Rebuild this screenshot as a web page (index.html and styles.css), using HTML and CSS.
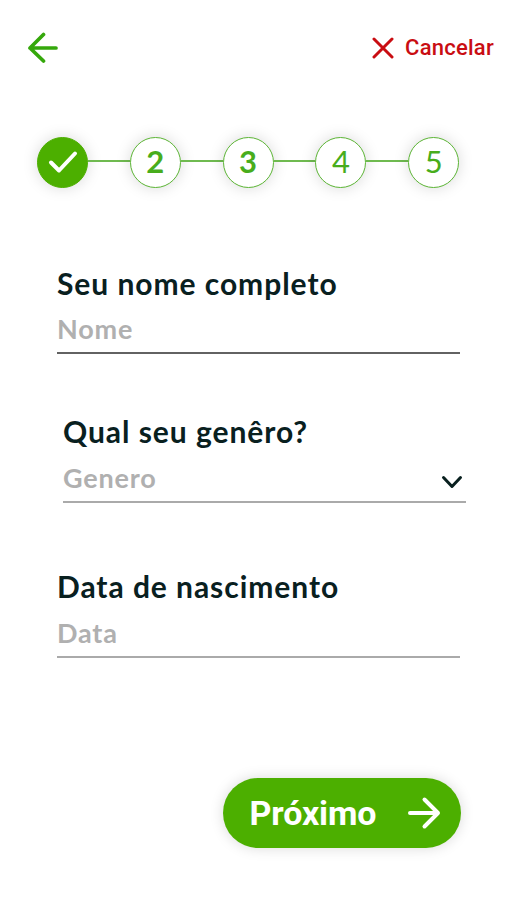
FILE: index.html
```html
<!DOCTYPE html>
<html lang="pt-BR">
<head>
<meta charset="utf-8">
<title>Cadastro</title>
<link rel="stylesheet" href="styles.css">
</head>
<body>
<header class="topbar">
  <svg class="back" width="32" height="32" viewBox="0 0 32 32"><path d="M29 16H3M16.500 2.500L3 16L16.500 29"/></svg>
  <div class="cancel">
    <svg width="22" height="22" viewBox="0 0 22 22"><path d="M2 2L20 20M20 2L2 20"/></svg>
    <span class="cancel-text">Cancelar</span>
  </div>
</header>
<ol class="steps">
  <li class="step done"><svg width="30" height="24" viewBox="0 0 30 24"><path d="M3 12.500L11 20.500L27 3.500"/></svg></li>
  <li class="line"></li>
  <li class="step bold">2</li>
  <li class="line"></li>
  <li class="step bold">3</li>
  <li class="line"></li>
  <li class="step">4</li>
  <li class="line"></li>
  <li class="step">5</li>
</ol>
<main class="form">
  <section class="field name">
    <div class="label"><span class="label-name">Seu nome completo</span></div>
    <div class="value"><span class="value-name">Nome</span></div>
  </section>
  <section class="field gender">
    <div class="label"><span class="label-gender">Qual seu genêro?</span></div>
    <div class="value"><span class="value-gender">Genero</span><svg width="22" height="14" viewBox="0 0 22 14"><path d="M2.500 2.500L11 11.500L19.500 2.500"/></svg></div>
  </section>
  <section class="field birth">
    <div class="label"><span class="label-birth">Data de nascimento</span></div>
    <div class="value"><span class="value-birth">Data</span></div>
  </section>
</main>
<div class="next">
  <span class="next-text">Próximo</span>
  <svg width="34" height="34" viewBox="0 0 34 34"><path d="M3 17H31M17.500 3.500L31 17L17.500 30.500"/></svg>
</div>
</body>
</html>
```
FILE: styles.css
```css
* { box-sizing: border-box; }
body { margin: 0; width: 506px; height: 900px; overflow: hidden; background: #fff; font-family: Lato, sans-serif; }
svg { display: block; flex: none; fill: none; stroke: currentColor; stroke-linecap: round; stroke-linejoin: round; }
.topbar { display: flex; justify-content: space-between; align-items: center; height: 96px; padding: 0 12px 0 27px; }
.back { color: #35a80b; stroke-width: 3.7; }
.cancel { display: flex; align-items: center; gap: 11px; color: #c90d12; font: 500 22px/30px Roboto, sans-serif; }
.cancel svg { stroke-width: 3; }
.cancel-text { letter-spacing: .25px; }
.steps { display: flex; align-items: center; list-style: none; margin: 40px 0 0; padding: 0 0 0 37px; height: 52px; }
.step { display: flex; flex: none; align-items: center; justify-content: center; width: 51px; height: 51px; padding-bottom: 2px; border: 1.5px solid #5cb535; border-radius: 50%; background: #fff; color: #48ad1c; font-size: 31px; line-height: 46px; box-shadow: 0 0 15px rgba(0, 0, 0, .15); }
.bold { font-weight: 700; }
.done { padding: 0; background: #4caf00; border-color: #4caf00; color: #fff; stroke-width: 4; }
.line { flex: none; width: 41.8px; height: 2px; margin-bottom: 2px; background: #6fba50; }
.form { padding: 74px 46px 0 57px; }
.field { height: 92px; width: 403px; }
.label { height: 42px; font-size: 30px; font-weight: 700; line-height: 42px; letter-spacing: .95px; color: #09201f; white-space: nowrap; }
.value { display: flex; justify-content: space-between; height: 50px; border-bottom: 2px solid #aaa; font-size: 27px; font-weight: 700; line-height: 49px; letter-spacing: .8px; color: #b0b0b0; }
.name .value { border-color: #626262; }
.gender { margin: 56px 0 0 6px; }
.gender .label { height: 43px; }
.gender .value svg { color: #09201f; stroke-width: 3; margin: 22px 3px 0 0; }
.birth { margin-top: 64px; }
.birth .label { line-height: 40px; }
.next { display: flex; align-items: center; justify-content: space-between; width: 238px; height: 70px; margin: 120px 0 0 222.5px; padding: 0 20px 0 27px; border-radius: 35px; background: #4caf00; color: #fff; font: 700 34px/70px Roboto, sans-serif; box-shadow: 0 0 14px rgba(0, 0, 0, .15); }
.next-text { letter-spacing: -.1px; }
.next svg { stroke-width: 4; }
```
